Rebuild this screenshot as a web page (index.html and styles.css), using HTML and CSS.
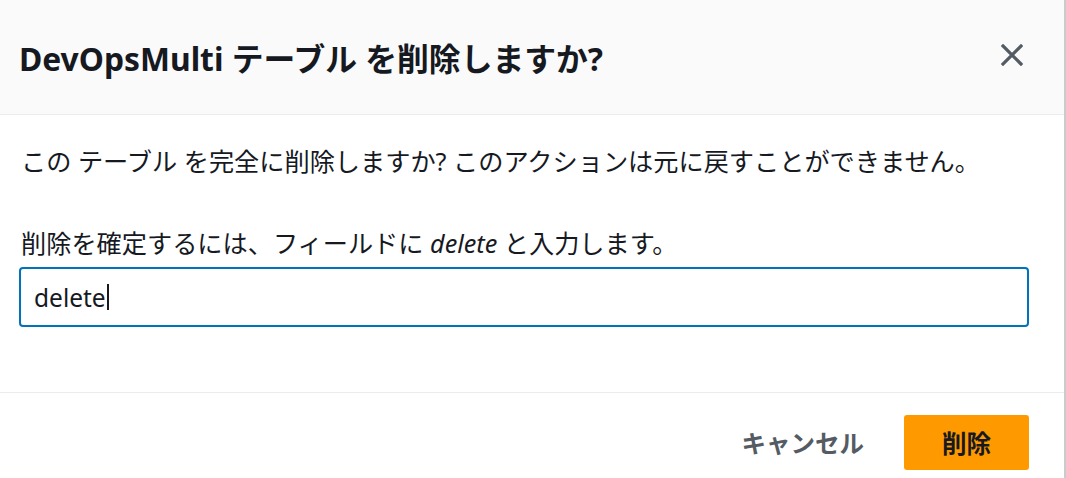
FILE: index.html
```html
<!DOCTYPE html>
<html lang="ja">
<head>
<meta charset="utf-8">
<title>DevOpsMulti テーブル を削除しますか?</title>
<link rel="stylesheet" href="styles.css">
</head>
<body>
<div class="modal">
  <div class="modal-header">
    <h2 class="modal-title">DevOpsMulti テーブル を削除しますか?</h2>
    <button class="close" aria-label="閉じる">
      <svg width="22" height="22" viewBox="0 0 22 22"><path d="M2 2 L20 20 M20 2 L2 20" stroke="#545b64" stroke-width="3.2" fill="none" stroke-linecap="square"/></svg>
    </button>
  </div>
  <div class="modal-body">
    <p class="desc">この テーブル を完全に削除しますか? このアクションは元に戻すことができません。</p>
    <p class="label">削除を確定するには、フィールドに <em>delete</em> と入力します。</p>
    <div class="input">delete<span class="caret"></span></div>
  </div>
  <div class="modal-footer">
    <button class="btn btn-link">キャンセル</button>
    <button class="btn btn-primary">削除</button>
  </div>
</div>
</body>
</html>
```
FILE: styles.css
```css
html, body {
  margin: 0;
  padding: 0;
  background: #ffffff;
  font-family: "Noto Sans", "Noto Sans CJK JP", sans-serif;
  color: #16191f;
}

.modal {
  width: 1064px;
  height: 478px;
  border-right: 2px solid #c9cccf;
  overflow: hidden;
}

.modal-header {
  height: 114px;
  background: #fafafa;
  border-bottom: 1px solid #eaeded;
  display: flex;
  align-items: center;
  justify-content: space-between;
  padding: 0 41px 0 19px;
}

.modal-title {
  margin: 0;
  font-size: 31.8px;
  font-weight: 700;
  line-height: 1;
  color: #16191f;
  padding-top: 4px;
}

.close {
  border: 0;
  background: transparent;
  padding: 0;
  width: 22px;
  height: 22px;
  display: flex;
  margin-bottom: 5px;
}

.modal-body {
  padding: 29px 35px 0 19px;
}

.desc, .label {
  margin: 0;
  font-size: 25.2px;
  line-height: 35px;
  padding-left: 2px;
}

.desc {
  margin-bottom: 47px;
}

.label {
  margin-bottom: 6px;
}

.label em {
  font-style: italic;
}

.input {
  height: 56px;
  border: 2px solid #0073bb;
  border-radius: 4px;
  display: flex;
  align-items: center;
  padding-left: 13px;
  font-size: 24.5px;
  color: #16191f;
}

.caret {
  display: inline-block;
  width: 2px;
  height: 26px;
  background: #16191f;
  margin-left: 1px;
}

.modal-footer {
  margin-top: 65px;
  border-top: 1px solid #eaeded;
  padding: 22px 35px 0 19px;
  display: flex;
  justify-content: flex-end;
  align-items: center;
  gap: 20px;
}

.btn {
  font-family: inherit;
  font-size: 24.5px;
  font-weight: 700;
  height: 55px;
  border: 0;
  border-radius: 3px;
  padding: 0 20px;
  cursor: pointer;
}

.btn-link {
  background: transparent;
  color: #545b64;
}

.btn-primary {
  background: #ff9900;
  color: #16191f;
  width: 125px;
  padding: 0;
}
```
